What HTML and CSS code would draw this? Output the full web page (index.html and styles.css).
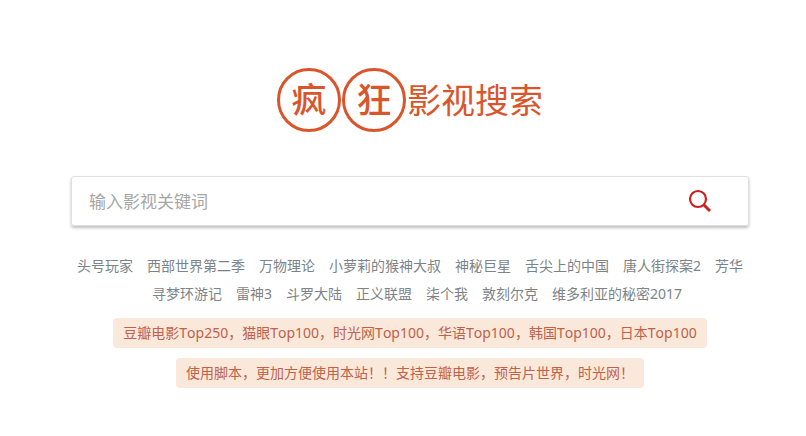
FILE: index.html
```html
<!DOCTYPE html>
<html lang="zh-CN">
<head>
    <meta charset="UTF-8">
    <meta name="viewport" content="width=device-width, initial-scale=1.0">
    <title>疯狂影视搜索</title>
    <link rel="stylesheet" href="styles.css">
</head>
<body>
    <div class="container">
        <h1 class="logo">
            <span class="circle">疯</span>
            <span class="circle">狂</span>
            <span class="name">影视搜索</span>
        </h1>
        <form class="search">
            <input type="text" name="q" placeholder="输入影视关键词" aria-label="输入影视关键词">
            <button type="submit" aria-label="搜索">
                <svg width="24" height="24" viewBox="0 0 24 24" fill="none" stroke="#c9211e">
                    <circle cx="10" cy="10" r="8" stroke-width="2.2"/>
                    <path d="M15.5 15.5L22 22" stroke-width="3"/>
                </svg>
            </button>
        </form>
        <ul class="hot">
            <li><a href="#">头号玩家</a></li>
            <li><a href="#">西部世界第二季</a></li>
            <li><a href="#">万物理论</a></li>
            <li><a href="#">小萝莉的猴神大叔</a></li>
            <li><a href="#">神秘巨星</a></li>
            <li><a href="#">舌尖上的中国</a></li>
            <li><a href="#">唐人街探案2</a></li>
            <li><a href="#">芳华</a></li>
            <li><a href="#">寻梦环游记</a></li>
            <li><a href="#">雷神3</a></li>
            <li><a href="#">斗罗大陆</a></li>
            <li><a href="#">正义联盟</a></li>
            <li><a href="#">柒个我</a></li>
            <li><a href="#">敦刻尔克</a></li>
            <li><a href="#">维多利亚的秘密2017</a></li>
        </ul>
        <div class="tips">
            <a class="tip" href="#">豆瓣电影Top250，猫眼Top100，时光网Top100，华语Top100，韩国Top100，日本Top100</a>
            <a class="tip" href="#">使用脚本，更加方便使用本站！！支持豆瓣电影，预告片世界，时光网！</a>
        </div>
    </div>
</body>
</html>
```
FILE: styles.css
```css
* {
    box-sizing: border-box;
}
body {
    margin: 0;
    background-color: #fff;
    font-family: "Noto Sans", "Noto Sans CJK SC", sans-serif;
    font-size: 14px;
    font-kerning: none;
}
a {
    color: inherit;
    text-decoration: none;
}
.container {
    max-width: 1000px;
    margin: 0 auto;
    padding: 68px 57px 48px 71px;
}
.logo {
    display: flex;
    justify-content: center;
    align-items: center;
    gap: 1px;
    margin: 0 0 44px;
    color: #d9552b;
    font-weight: normal;
}
.circle {
    width: 64px;
    height: 64px;
    border: 3px solid #d9552b;
    border-radius: 50%;
    font-size: 35px;
    font-weight: 500;
    line-height: 58px;
    text-align: center;
}
.name {
    font-size: 34px;
    line-height: 64px;
}
/* 搜索框 */
.search {
    display: flex;
    height: 50px;
    padding: 0 36px 0 17px;
    border: 1px solid #e0e0e0;
    border-radius: 3px;
    box-shadow: 0 2px 3px rgba(0, 0, 0, 0.25);
}
.search input {
    flex: 1;
    min-width: 0;
    padding: 0;
    border: none;
    outline: none;
    background: none;
    color: #333;
    font-family: inherit;
    font-size: 17px;
}
.search input::placeholder {
    color: #a6a6a6;
}
.search button {
    display: flex;
    align-items: center;
    padding: 0;
    border: none;
    background: none;
    cursor: pointer;
}
/* 热门影视 */
.hot {
    display: flex;
    flex-wrap: wrap;
    justify-content: center;
    margin: 26px 0 10px;
    padding: 0;
    list-style: none;
    color: #7d8488;
    line-height: 28px;
}
.hot li + li {
    margin-left: 14px;
}
.tips {
    display: flex;
    flex-direction: column;
    align-items: center;
    gap: 10px;
}
.tip {
    padding: 0 10px;
    border-radius: 4px;
    background-color: #fae8da;
    color: #c0614a;
    line-height: 30px;
}
```
